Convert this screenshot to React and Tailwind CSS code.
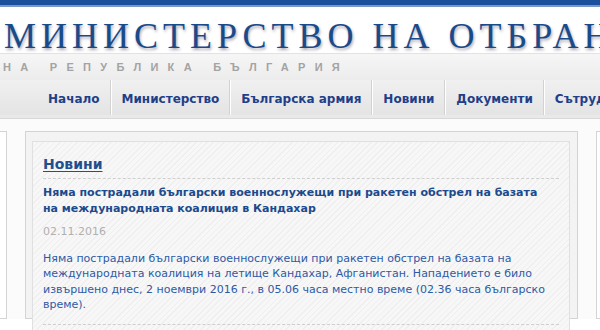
const navItems = ["Начало", "Министерство", "Българска армия", "Новини", "Документи", "Сътрудничество"];

export default function App() {
  return (
    <div className="w-[600px] h-[330px] overflow-hidden bg-white" style={{ fontFamily: '"DejaVu Sans", Tahoma, sans-serif' }}>
      {/* top stripe */}
      <div className="h-[5px] bg-[#1b4f9b]" />
      <div className="h-[2px] bg-[#7a97c6]" />

      {/* title */}
      <div className="h-[46px] pl-[4px] pt-[10px] whitespace-nowrap">
        <span
          className="text-[36px] leading-[38px] tracking-[5px] text-[#1a4a8a] [text-shadow:1px_2px_3px_rgba(0,0,40,0.35)]"
          style={{ fontFamily: '"Liberation Serif", "Times New Roman", serif' }}
        >
          МИНИСТЕРСТВО НА ОТБРАНАТА
        </span>
      </div>

      {/* subtitle band */}
      <div className="h-[27px] border-t border-[#e2e2e2] bg-gradient-to-b from-[#f6f6f6] to-[#ececec] pl-[3px] flex items-center whitespace-nowrap">
        <span className="text-[11px] font-bold tracking-[9.3px] text-[#a3a3a3]" style={{ fontFamily: '"Liberation Sans", Arial, sans-serif' }}>
          НА РЕПУБЛИКА БЪЛГАРИЯ
        </span>
      </div>

      {/* nav */}
      <div className="h-[35px] bg-gradient-to-b from-[#f0f0f0] to-[#e4e4e4] flex items-stretch pl-[38px] whitespace-nowrap">
        {navItems.map((item, i) => (
          <div key={item} className="flex items-stretch">
            {i > 0 && (
              <div className="flex">
                <div className="w-px bg-[#d2d2d2]" />
                <div className="w-px bg-white" />
              </div>
            )}
            <div className="flex items-center px-[10px] pt-[2px] text-[12px] font-bold text-[#1f3f88]">{item}</div>
          </div>
        ))}
      </div>
      <div className="h-[4px] bg-[#e9e9e9] border-b border-[#d8d8d8]" />

      {/* content */}
      <div className="flex gap-[18px] pt-[12px] bg-[#fbfbfb] h-[200px]">
        <div className="w-[7px] shrink-0 border border-l-0 border-[#d4d4d4] bg-white" />

        <div className="w-[553px] shrink-0 border border-[#d3d3d3] bg-[#f3f3f3] pl-[6px] pr-[7px] pt-[9px]">
          <div className="h-[220px] border border-[#e0e0e0] bg-[repeating-linear-gradient(135deg,#f7f7f7_0px,#f7f7f7_3px,#efefef_3px,#efefef_4px)] px-[10px] pt-[10px]">
            <div className="pb-[2px] border-b border-dashed border-[#cfcfcf]">
              <span className="text-[14px] font-bold underline underline-offset-[2px] text-[#1f4f8f]">Новини</span>
            </div>
            <div className="mt-[6px] text-[11px] leading-[16px] font-bold text-[#1c4a8c]">
              Няма пострадали български военнослужещи при ракетен обстрел на базата
              <br />
              на международната коалиция в Кандахар
            </div>
            <div className="mt-[8px] text-[11px] leading-[14px] text-[#b0b0b0]">02.11.2016</div>
            <div className="mt-[12px] text-[11px] leading-[15.3px] text-[#2d5aa6]">
              Няма пострадали български военнослужещи при ракетен обстрел на базата на
              <br />
              международната коалиция на летище Кандахар, Афганистан. Нападението е било
              <br />
              извършено днес, 2 ноември 2016 г., в 05.06 часа местно време (02.36 часа българско
              <br />
              време).
            </div>
            <div className="mt-[12px] border-b border-dashed border-[#cfcfcf]" />
          </div>
        </div>

        <div className="w-[30px] shrink-0 border border-[#d4d4d4] bg-white" />
      </div>
    </div>
  );
}
